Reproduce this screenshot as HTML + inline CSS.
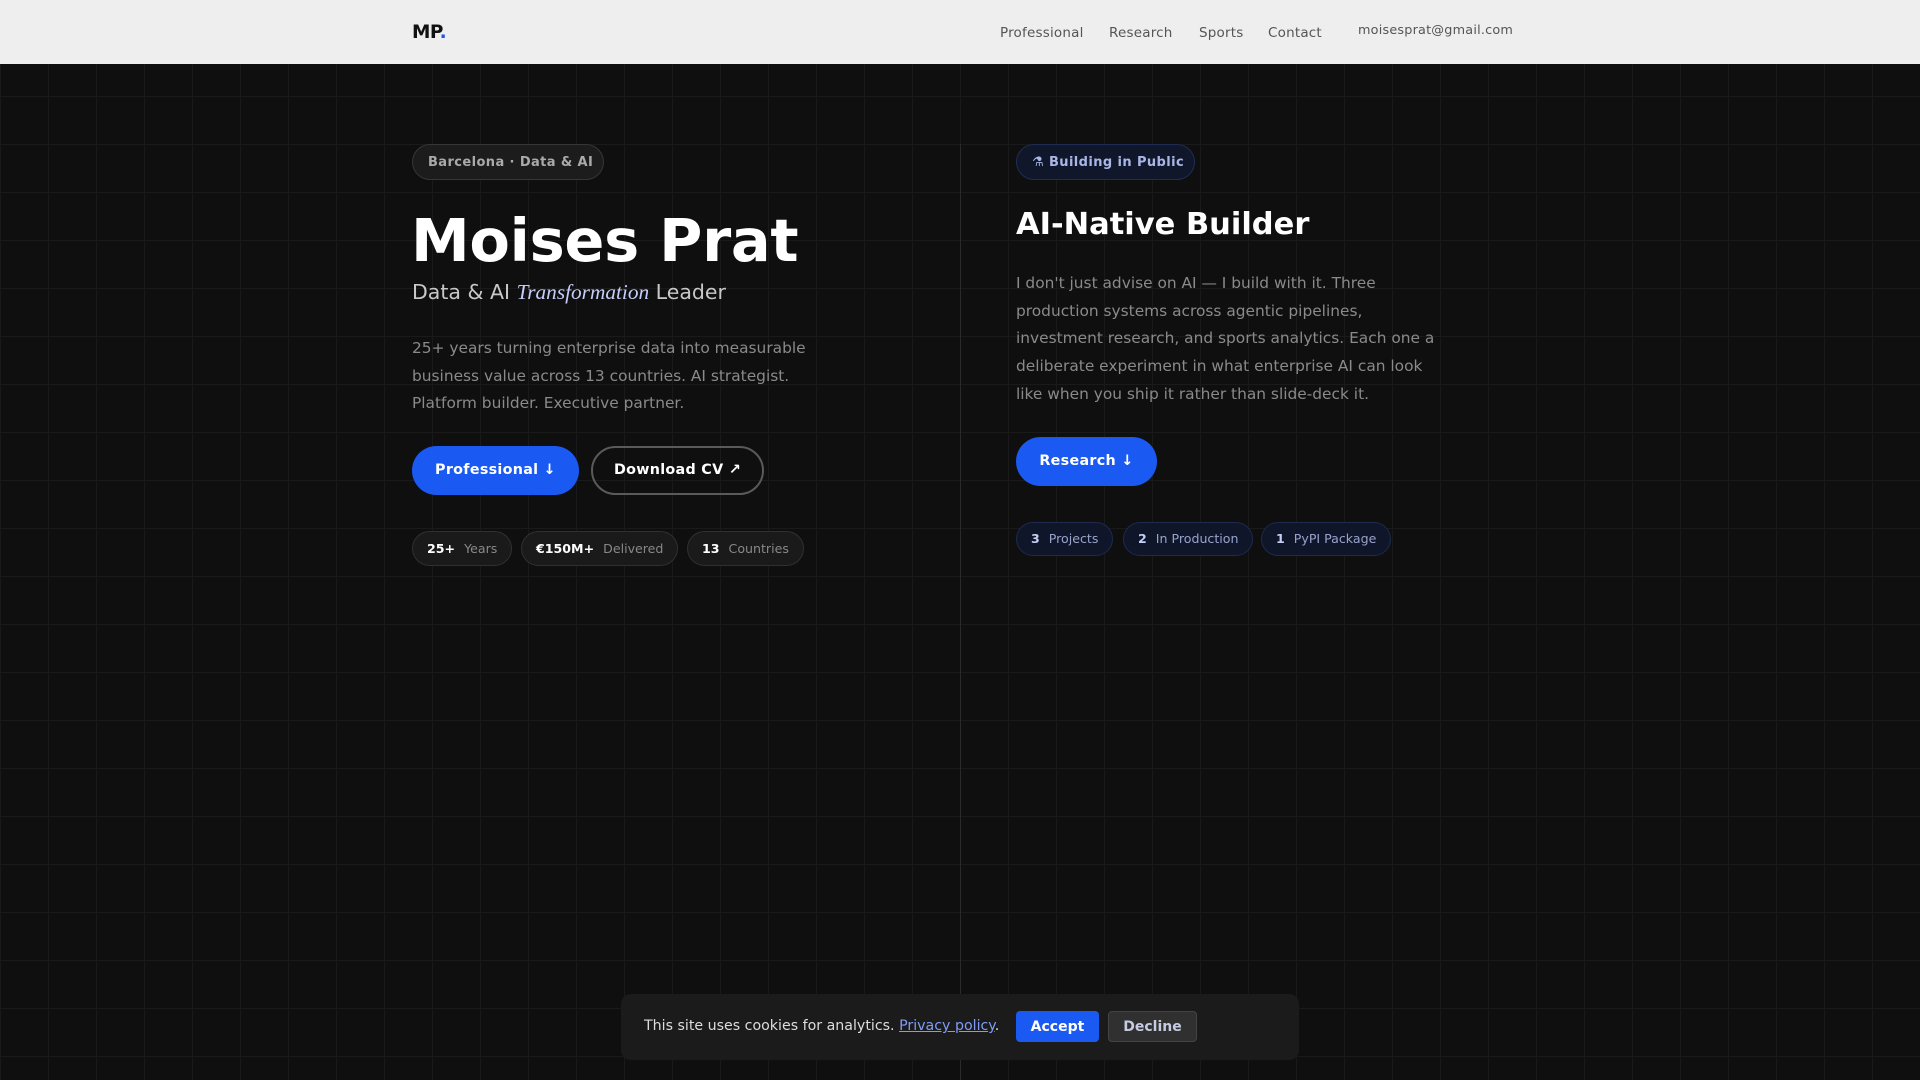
<!DOCTYPE html>
<html><head><meta charset="utf-8"><style>
*{margin:0;padding:0;box-sizing:border-box}
body{width:1920px;height:1080px;overflow:hidden;font-family:"DejaVu Sans","Liberation Sans",sans-serif;background-color:#0f0f0f;background-image:linear-gradient(#1a1a1a 1px,transparent 1px),linear-gradient(90deg,#1a1a1a 1px,transparent 1px);background-size:48px 48px;position:relative;color:#fff}
.nav{position:absolute;top:0;left:0;width:1920px;height:64px;background:#eeeeee}
.logo{position:absolute;left:412px;top:22px;font-weight:bold;font-size:18.5px;color:#111;letter-spacing:-0.5px}
.logo span{color:#1a56f0}
.nl{position:absolute;top:25px;font-size:13.5px;color:#555;letter-spacing:0.2px}
.divider{position:absolute;left:960px;top:144px;width:1px;height:936px;background:#2a2a2a}
.badge{position:absolute;height:36px;border-radius:18px;font-weight:bold;font-size:13px;line-height:35px;padding:0 15px;letter-spacing:0.4px;white-space:nowrap}
.b1{left:412px;top:144px;width:192px;background:#1c1c1c;border:1px solid #363636;color:#aaa}
.b2{left:1016px;top:144px;width:179px;background:#10172a;border:1px solid #1f2d55;color:#a9b6e6}
h1{position:absolute;left:411px;top:205px;font-size:59px;font-weight:bold;line-height:72px;letter-spacing:-0.3px;white-space:nowrap}
.sub{position:absolute;left:412px;top:280px;font-size:20.5px;color:#c8c8c8;white-space:nowrap}
.sub i{font-family:"Liberation Serif","DejaVu Serif",serif;color:#c7cdfa;font-size:21.3px}
.p{position:absolute;font-size:15.4px;color:#8a8a8a}
.btn{position:absolute;height:49px;border-radius:25px;font-weight:bold;font-size:14.3px;line-height:49px;text-align:center;color:#fff;letter-spacing:0.3px;white-space:nowrap}
.blue{background:#1a5af2}
.out{border:2px solid #5a5a5a;line-height:45px}
.pill{position:absolute;height:35px;border-radius:18px;font-size:12.6px;line-height:33px;padding:0 14px;white-space:nowrap}
.pill b{margin-right:9px}
.pd{background:#1a1a1a;border:1px solid #303030;color:#888}
.pd b{color:#fff}
.pb{background:#10162a;border:1px solid #1e2a4e;color:#98a3cc;height:34px;line-height:32px}
.pb b{color:#c5cef5}
h2{position:absolute;left:1016px;top:207px;font-size:30.5px;font-weight:bold;white-space:nowrap}
.cookie{position:absolute;left:621px;top:994px;width:678px;height:66px;background:#1b1b1b;border-radius:10px}
.cookie .t{position:absolute;left:23px;top:24px;font-size:14.2px;color:#ddd;white-space:nowrap}
.cookie a{color:#7f9cf5;text-decoration:underline}
.cb{position:absolute;top:17px;height:31px;border-radius:4px;font-weight:bold;font-size:14px;line-height:32px;text-align:center}
</style></head><body>
<div class="nav">
<div class="logo">MP<span>.</span></div>
<div class="nl" style="left:1000px">Professional</div>
<div class="nl" style="left:1109px">Research</div>
<div class="nl" style="left:1199px">Sports</div>
<div class="nl" style="left:1268px">Contact</div>
<div class="nl" style="left:1358px;top:23px;font-size:12.8px;letter-spacing:0.2px">moisesprat@gmail.com</div>
</div>
<div class="divider"></div>

<div class="badge b1">Barcelona · Data &amp; AI</div>
<h1>Moises Prat</h1>
<div class="sub">Data &amp; AI <i>Transformation</i> Leader</div>
<div class="p" style="left:412px;top:335px;line-height:27.5px;width:410px">25+ years turning enterprise data into measurable business value across 13 countries. AI strategist. Platform builder. Executive partner.</div>
<div class="btn blue" style="left:412px;top:446px;width:167px">Professional ↓</div>
<div class="btn out" style="left:591px;top:446px;width:173px">Download CV ↗</div>
<div class="pill pd" style="left:412px;top:531px"><b>25+</b>Years</div>
<div class="pill pd" style="left:521px;top:531px"><b>€150M+</b>Delivered</div>
<div class="pill pd" style="left:687px;top:531px"><b>13</b>Countries</div>

<div class="badge b2">⚗ Building in Public</div>
<h2>AI-Native Builder</h2>
<div class="p" style="left:1016px;top:270px;line-height:27.7px;width:430px">I don't just advise on AI — I build with it. Three production systems across agentic pipelines, investment research, and sports analytics. Each one a deliberate experiment in what enterprise AI can look like when you ship it rather than slide-deck it.</div>
<div class="btn blue" style="left:1016px;top:437px;width:141px">Research ↓</div>
<div class="pill pb" style="left:1016px;top:522px"><b>3</b>Projects</div>
<div class="pill pb" style="left:1123px;top:522px"><b>2</b>In Production</div>
<div class="pill pb" style="left:1261px;top:522px"><b>1</b>PyPI Package</div>

<div class="cookie">
<div class="t">This site uses cookies for analytics. <a>Privacy policy</a>.</div>
<div class="cb" style="left:395px;width:83px;background:#1a5af2;color:#fff">Accept</div>
<div class="cb" style="left:487px;width:89px;background:#303030;border:1px solid #444;color:#c5cbe0;line-height:30px">Decline</div>
</div>
</body></html>
